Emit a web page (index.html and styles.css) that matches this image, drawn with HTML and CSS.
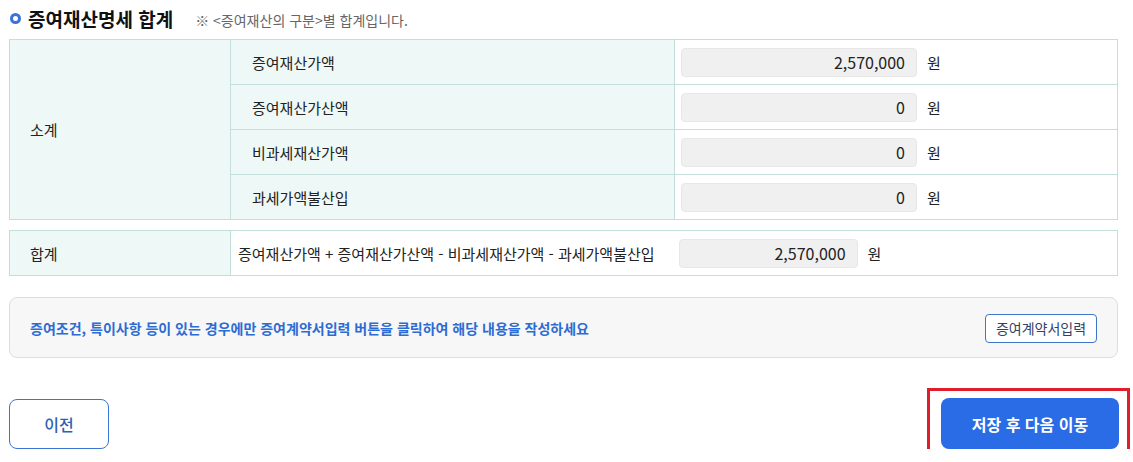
FILE: index.html
```html
<!DOCTYPE html>
<html lang="ko">
<head>
<meta charset="utf-8">
<title>증여재산명세 합계</title>
<link rel="stylesheet" href="styles.css">
</head>
<body>
<div class="page">
  <div class="section-head">
    <span class="dot"></span>
    <h2 class="title">증여재산명세 합계</h2>
    <span class="note">※ &lt;증여재산의 구분&gt;별 합계입니다.</span>
  </div>

  <table class="sum-table">
    <colgroup>
      <col class="c1"><col class="c2"><col class="c3">
    </colgroup>
    <tr>
      <th class="group" rowspan="4">소계</th>
      <th class="sub">증여재산가액</th>
      <td class="val"><span class="amount">2,570,000</span><span class="unit">원</span></td>
    </tr>
    <tr>
      <th class="sub">증여재산가산액</th>
      <td class="val"><span class="amount">0</span><span class="unit">원</span></td>
    </tr>
    <tr>
      <th class="sub">비과세재산가액</th>
      <td class="val"><span class="amount">0</span><span class="unit">원</span></td>
    </tr>
    <tr>
      <th class="sub">과세가액불산입</th>
      <td class="val"><span class="amount">0</span><span class="unit">원</span></td>
    </tr>
  </table>

  <div class="total-row">
    <div class="total-label">합계</div>
    <div class="total-body">
      <span class="formula">증여재산가액 + 증여재산가산액 - 비과세재산가액 - 과세가액불산입</span>
      <span class="amount amount-total">2,570,000</span>
      <span class="unit">원</span>
    </div>
  </div>

  <div class="notice">
    <p class="notice-text">증여조건, 특이사항 등이 있는 경우에만 증여계약서입력 버튼을 클릭하여 해당 내용을 작성하세요</p>
    <button class="btn-outline-sm">증여계약서입력</button>
  </div>

  <div class="actions">
    <button class="btn-prev">이전</button>
    <div class="highlight">
      <button class="btn-next">저장 후 다음 이동</button>
    </div>
  </div>
</div>
</body>
</html>
```

FILE: styles.css
```css
* { box-sizing: border-box; }
html, body { margin: 0; padding: 0; background: #fff; overflow: hidden; }
body {
  font-family: "Noto Sans CJK KR", "Noto Sans", sans-serif;
  color: #222;
}
.page {
  width: 1109px;
  margin-left: 9px;
}
.section-head {
  display: flex;
  align-items: center;
  height: 39px;
  padding-bottom: 2px;
}
.dot {
  width: 11px;
  height: 11px;
  border: 3px solid #3a72d6;
  border-radius: 50%;
  margin-left: 1px;
  margin-right: 7px;
  flex: none;
}
.title {
  margin: 0;
  font-size: 19px;
  font-weight: 700;
  color: #111;
}
.note {
  margin-left: 22px;
  font-size: 14px;
  color: #666;
  padding-top: 2px;
}

.sum-table {
  width: 1109px;
  border-collapse: collapse;
  table-layout: fixed;
}
.c1 { width: 221px; }
.c2 { width: 444px; }
.sum-table th, .sum-table td {
  border: 1px solid #c4dedb;
  height: 45px;
  padding: 0;
  font-size: 15px;
  font-weight: 400;
  text-align: left;
}
.sum-table th { background: #eef8f7; color: #222; }
.group { padding-left: 20px !important; }
.sub { padding-left: 21px !important; }
.val { padding-left: 6px !important; }

.amount {
  display: inline-flex;
  align-items: center;
  justify-content: flex-end;
  width: 236px;
  height: 29px;
  padding-right: 11px;
  background: #f0f0f0;
  border: 1px solid #e7e7e7;
  border-radius: 4px;
  font-size: 16px;
  color: #222;
  vertical-align: middle;
}
.unit {
  margin-left: 10px;
  font-size: 15px;
  vertical-align: middle;
}

.total-row {
  display: flex;
  margin-top: 10px;
  height: 46px;
  border: 1px solid #c4dedb;
}
.total-label {
  width: 221px;
  flex: none;
  background: #eef8f7;
  border-right: 1px solid #c4dedb;
  display: flex;
  align-items: center;
  padding-left: 20px;
  font-size: 15px;
}
.total-body {
  display: flex;
  align-items: center;
  padding-left: 7px;
  font-size: 15px;
}
.formula { margin-right: 24px; }
.amount-total { width: 179px; }

.notice {
  margin-top: 21px;
  height: 61px;
  background: #f7f7f8;
  border: 1px solid #dedede;
  border-radius: 8px;
  display: flex;
  align-items: center;
  justify-content: space-between;
  padding: 0 20px;
}
.notice-text {
  margin: 0;
  font-size: 14px;
  font-weight: 700;
  color: #2c6cd3;
}
.btn-outline-sm {
  height: 29px;
  width: 112px;
  background: #fff;
  border: 1px solid #3f74c9;
  border-radius: 4px;
  font-family: inherit;
  font-size: 14px;
  color: #2f4368;
  padding: 0;
  margin-top: 1px;
}

.actions {
  display: flex;
  justify-content: space-between;
  align-items: center;
  margin-top: 40px;
}
.btn-prev {
  width: 100px;
  height: 50px;
  background: #fff;
  border: 1px solid #3a74d4;
  border-radius: 8px;
  font-family: inherit;
  font-size: 16px;
  font-weight: 500;
  color: #2d5fb4;
}
.highlight {
  position: relative;
  margin-right: -1px;
}
.highlight::after {
  content: "";
  position: absolute;
  left: -14px;
  right: -11px;
  top: -10px;
  bottom: -7px;
  border: 3px solid #e01e2b;
  pointer-events: none;
}
.btn-next {
  display: block;
  width: 178px;
  height: 51px;
  background: #2a6be6;
  border: none;
  border-radius: 8px;
  font-family: inherit;
  font-size: 16px;
  font-weight: 700;
  color: #fff;
}
```
